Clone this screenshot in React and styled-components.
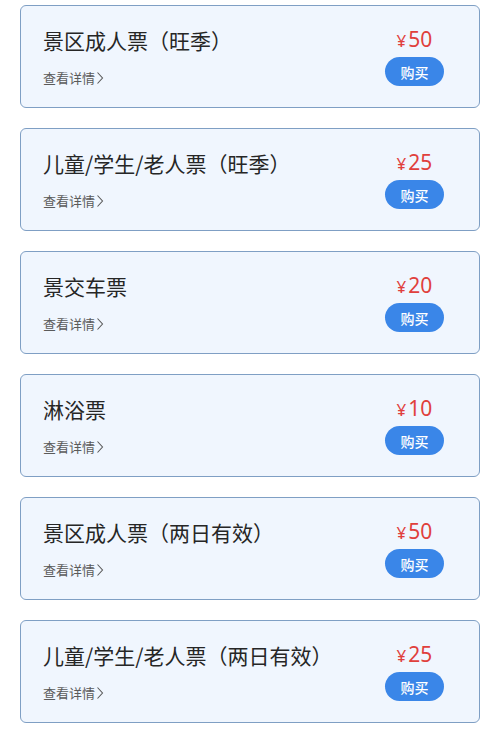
import React from "react";
import styled, { createGlobalStyle } from "styled-components";

const GlobalStyle = createGlobalStyle`
  body {
    margin: 0;
    background: #ffffff;
    font-family: "Noto Sans CJK SC", "Noto Sans", sans-serif;
  }
`;

const List = styled.div`
  display: flex;
  flex-direction: column;
  gap: 20px;
  padding: 5px 20px 0 20px;
`;

const Card = styled.div`
  height: 103px;
  box-sizing: border-box;
  display: flex;
  align-items: stretch;
  justify-content: space-between;
  background: #f0f6fe;
  border: 1.5px solid #7f9fc4;
  border-radius: 6px;
  padding: 0 35px 0 22px;
`;

const Info = styled.div`
  display: flex;
  flex-direction: column;
  padding-top: 19px;
`;

const Title = styled.div`
  font-size: 21px;
  line-height: 30px;
  color: #262626;
`;

const Detail = styled.div`
  margin-top: 14px;
  font-size: 13px;
  line-height: 18px;
  color: #5a5a5a;
  display: flex;
  align-items: center;
  gap: 1px;
`;

const Side = styled.div`
  display: flex;
  flex-direction: column;
  align-items: center;
  padding-top: 20px;
`;

const Price = styled.div`
  color: #e0403c;
  font-family: "Noto Sans", "Noto Sans CJK SC", sans-serif;
  font-size: 21px;
  line-height: 26px;
  display: flex;
  align-items: baseline;
`;

const Yen = styled.span`
  font-size: 17px;
  margin-right: 2px;
`;

const BuyButton = styled.button`
  margin-top: 3px;
  width: 59px;
  height: 29px;
  border: none;
  border-radius: 15px;
  background: #3a86e8;
  color: #fff;
  font-family: "Noto Sans CJK SC", sans-serif;
  font-weight: 500;
  font-size: 14px;
  padding: 0;
`;

const Chevron = () => (
  <svg width="8" height="14" viewBox="0 0 8 14">
    <path d="M1.5 1.5 L6.5 7 L1.5 12.5" fill="none" stroke="#5a5a5a" strokeWidth="1.1" />
  </svg>
);

const tickets = [
  { name: "景区成人票（旺季）", price: 50 },
  { name: "儿童/学生/老人票（旺季）", price: 25 },
  { name: "景交车票", price: 20 },
  { name: "淋浴票", price: 10 },
  { name: "景区成人票（两日有效）", price: 50 },
  { name: "儿童/学生/老人票（两日有效）", price: 25 },
];

export default function App() {
  return (
    <>
      <GlobalStyle />
      <List>
        {tickets.map((t) => (
          <Card key={t.name}>
            <Info>
              <Title>{t.name}</Title>
              <Detail>
                查看详情
                <Chevron />
              </Detail>
            </Info>
            <Side>
              <Price>
                <Yen>¥</Yen>
                {t.price}
              </Price>
              <BuyButton>购买</BuyButton>
            </Side>
          </Card>
        ))}
      </List>
    </>
  );
}
